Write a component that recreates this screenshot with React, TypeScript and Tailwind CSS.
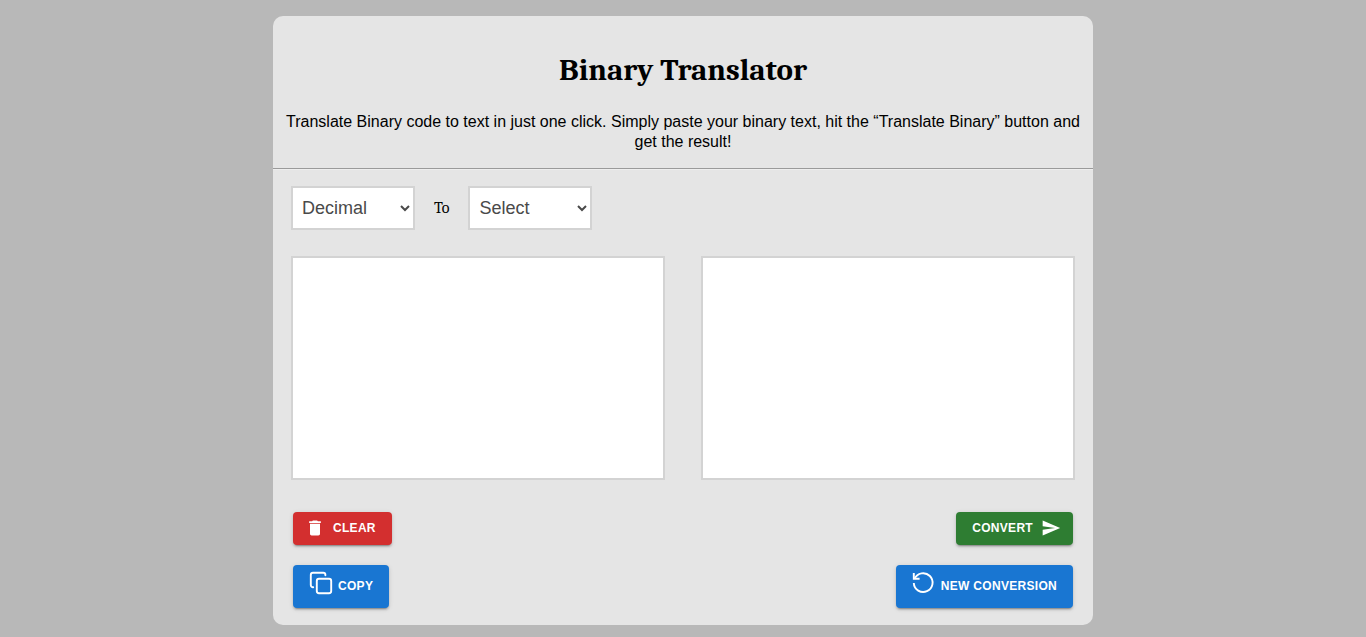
import { useState } from 'react';
import type { ReactNode } from 'react';
import { MdDelete, MdSend } from 'react-icons/md';

const formats = ['Decimal', 'Binary', 'Text', 'Hexadecimal'];

const buttonBase =
  "inline-flex items-center rounded pb-0.5 font-['Liberation_Sans',Arial,sans-serif] text-xs font-bold uppercase tracking-wide text-white shadow-[0_3px_1px_-2px_rgba(0,0,0,0.2),0_2px_2px_0_rgba(0,0,0,0.14),0_1px_5px_0_rgba(0,0,0,0.12)]";

function CopyIcon() {
  return (
    <svg aria-hidden="true" viewBox="-1 -1 25 25" className="mb-1 size-[25px]" fill="none" stroke="currentColor" strokeWidth="1.9" strokeLinecap="round" strokeLinejoin="round">
      <rect x="6.8" y="6.8" width="14.4" height="14.4" rx="2.2" />
      <path d="M3.2 15.2H3a2.2 2.2 0 0 1-2.2-2.2V3A2.2 2.2 0 0 1 3 .8h10.2a2.2 2.2 0 0 1 2.2 2.2v.3" />
    </svg>
  );
}

function RestartIcon() {
  return (
    <svg aria-hidden="true" viewBox="0 -1 25 25" className="mb-1 size-[25px]" fill="none" stroke="currentColor" strokeWidth="1.9">
      <path d="M1.8 1v5.8h5.8" />
      <path d="M2.6 6.8A9.4 9.4 0 1 1 1.8 11" />
    </svg>
  );
}

function FormatSelect({ label, value, options, onChange }: { label: string; value: string; options: string[]; onChange: (value: string) => void }) {
  return (
    <select
      aria-label={label}
      value={value}
      onChange={(e) => onChange(e.target.value)}
      className="h-11 w-31 border-2 border-[#d3d3d3] bg-white px-[5px] font-['Liberation_Sans',Arial,sans-serif] text-lg text-[#4a4a4a]"
    >
      {options.map((option) => (
        <option key={option}>{option}</option>
      ))}
    </select>
  );
}

function ActionButton({ className, onClick, children }: { className: string; onClick?: () => void; children: ReactNode }) {
  return (
    <button type="button" onClick={onClick} className={`${buttonBase} ${className}`}>
      {children}
    </button>
  );
}

export default function App() {
  const [source, setSource] = useState('');
  const [result, setResult] = useState('');
  const [from, setFrom] = useState('Decimal');
  const [to, setTo] = useState('Select');

  const clear = () => {
    setSource('');
    setResult('');
  };

  return (
    <div className="min-h-screen bg-[#b8b8b8] px-4 pt-4 pb-3">
      <main className="mx-auto max-w-[820px] rounded-[10px] bg-[#e5e5e5] pt-9 pb-[17px] text-black">
        <header className="px-2 text-center">
          <h1 className="font-[Cambria,Caladea,'Noto_Serif','Liberation_Serif',serif] text-[31px] leading-9 font-bold">Binary Translator</h1>
          <p className="mt-6 font-['Liberation_Sans',Arial,sans-serif] text-base leading-5">
            Translate Binary code to text in just one click. Simply paste your binary text, hit the “Translate Binary” button and get the result!
          </p>
        </header>
        <hr className="mt-4 border-t border-b border-t-[#9a9a9a] border-b-[#eeeeee]" />
        <div className="px-[18px] pt-4">
          <div className="flex items-center">
            <FormatSelect label="From" value={from} options={formats} onChange={setFrom} />
            <span className="px-[19px] font-[Cambria,Caladea,'Liberation_Serif',serif] text-base">To</span>
            <FormatSelect label="To" value={to} options={['Select', ...formats]} onChange={setTo} />
          </div>
          <div className="mt-[26px] grid grid-cols-2 gap-9">
            <textarea
              aria-label="Source text"
              value={source}
              onChange={(e) => setSource(e.target.value)}
              className="block h-56 w-full resize-none border-2 border-[#d3d3d3] bg-white p-2"
            />
            <textarea
              aria-label="Result"
              readOnly
              value={result}
              className="block h-56 w-full resize-none border-2 border-[#d3d3d3] bg-white p-2"
            />
          </div>
        </div>
        <div className="mt-8 flex flex-col gap-5 px-5">
          <div className="flex justify-between">
            <ActionButton className="h-[33px] gap-2 bg-[#d32f2f] pr-4 pl-3" onClick={clear}>
              <MdDelete className="size-5" />
              Clear
            </ActionButton>
            <ActionButton className="h-[33px] gap-2 bg-[#2e7d32] pr-3 pl-4">
              Convert
              <MdSend className="size-5" />
            </ActionButton>
          </div>
          <div className="flex justify-between">
            <ActionButton className="h-[43px] gap-1 bg-[#1976d2] px-4">
              <CopyIcon />
              Copy
            </ActionButton>
            <ActionButton className="h-[43px] gap-1 bg-[#1976d2] px-4" onClick={clear}>
              <RestartIcon />
              New Conversion
            </ActionButton>
          </div>
        </div>
      </main>
    </div>
  );
}
